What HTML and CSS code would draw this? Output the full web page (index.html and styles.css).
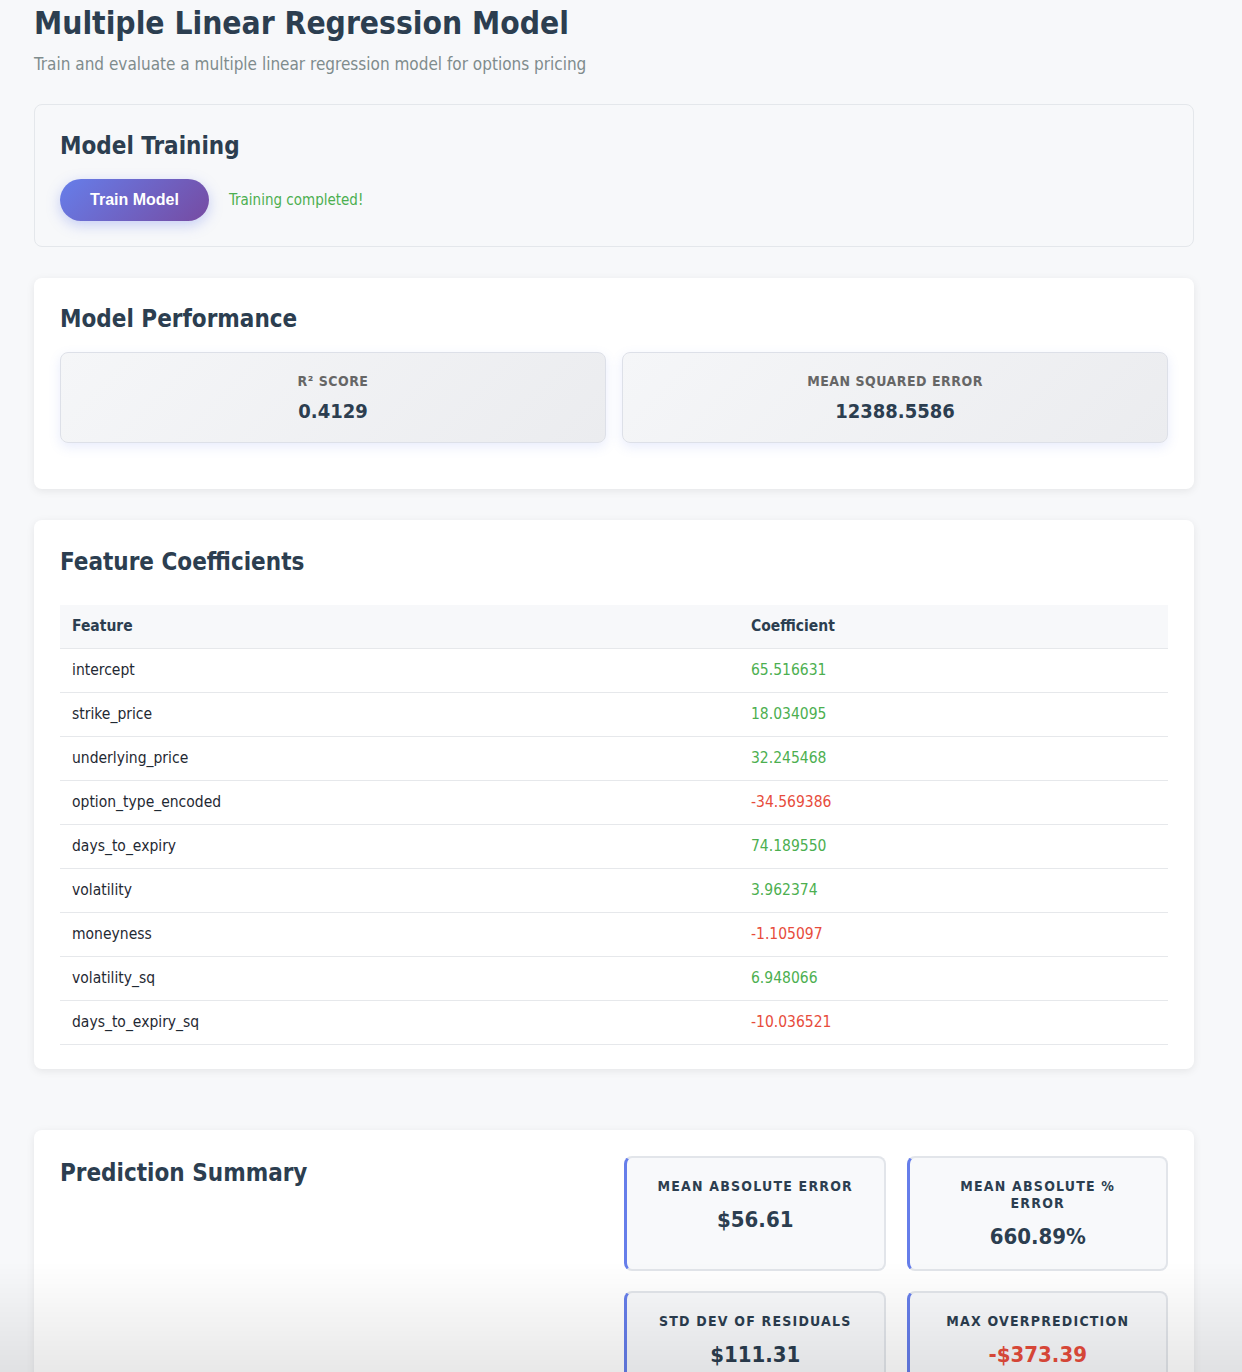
FILE: index.html
```html
<!DOCTYPE html>
<html lang="en">
<head>
<meta charset="utf-8">
<title>Multiple Linear Regression Model</title>
<link rel="stylesheet" href="styles.css">
</head>
<body>
<div class="container">
  <header class="page-header">
    <h1>Multiple Linear Regression Model</h1>
    <p class="subtitle">Train and evaluate a multiple linear regression model for options pricing</p>
  </header>

  <section class="card card-muted">
    <h2>Model Training</h2>
    <div class="train-row">
      <button class="btn-train">Train Model</button>
      <span class="status-ok">Training completed!</span>
    </div>
  </section>

  <section class="card card-perf">
    <h2>Model Performance</h2>
    <div class="metrics">
      <div class="metric">
        <div class="metric-label">R² Score</div>
        <div class="metric-value">0.4129</div>
      </div>
      <div class="metric">
        <div class="metric-label">Mean Squared Error</div>
        <div class="metric-value">12388.5586</div>
      </div>
    </div>
  </section>

  <section class="card card-table">
    <h2 class="h2-table">Feature Coefficients</h2>
    <table class="coef-table">
      <thead>
        <tr><th class="col-feature">Feature</th><th>Coefficient</th></tr>
      </thead>
      <tbody>
        <tr><td>intercept</td><td class="pos">65.516631</td></tr>
        <tr><td>strike_price</td><td class="pos">18.034095</td></tr>
        <tr><td>underlying_price</td><td class="pos">32.245468</td></tr>
        <tr><td>option_type_encoded</td><td class="neg">-34.569386</td></tr>
        <tr><td>days_to_expiry</td><td class="pos">74.189550</td></tr>
        <tr><td>volatility</td><td class="pos">3.962374</td></tr>
        <tr><td>moneyness</td><td class="neg">-1.105097</td></tr>
        <tr><td>volatility_sq</td><td class="pos">6.948066</td></tr>
        <tr><td>days_to_expiry_sq</td><td class="neg">-10.036521</td></tr>
      </tbody>
    </table>
  </section>

  <section class="card card-summary">
    <div class="summary-grid">
      <h2>Prediction Summary</h2>
      <div class="stats">
        <div class="stat">
          <div class="stat-label">Mean Absolute Error</div>
          <div class="stat-value">$56.61</div>
        </div>
        <div class="stat">
          <div class="stat-label">Mean Absolute % Error</div>
          <div class="stat-value">660.89%</div>
        </div>
        <div class="stat">
          <div class="stat-label">Std Dev of Residuals</div>
          <div class="stat-value">$111.31</div>
        </div>
        <div class="stat">
          <div class="stat-label">Max Overprediction</div>
          <div class="stat-value neg">-$373.39</div>
        </div>
      </div>
    </div>
  </section>
</div>
<div class="bottom-fade"></div>
</body>
</html>
```

FILE: styles.css
```css
* { box-sizing: border-box; }

body {
  margin: 0;
  padding: 0 48px 40px 34px;
  background: #f7f8fa;
  color: #2c3e50;
  font-family: "DejaVu Sans Condensed", "DejaVu Sans", sans-serif;
}

.container {
  max-width: 1160px;
}

.page-header {
  padding-top: 3px;
  margin-bottom: 29px;
}

h1 {
  margin: 0;
  font-size: 31.5px;
  line-height: 40px;
  font-weight: bold;
  color: #2c3e50;
}

.subtitle {
  margin: 0;
  margin-top: 10px;
  font-size: 17px;
  line-height: 22px;
  color: #7f8c8d;
}

.card {
  background: #fff;
  border-radius: 8px;
  padding: 24px 26px 26px;
  margin-bottom: 31px;
  box-shadow: 0 2px 8px rgba(0, 0, 0, 0.08);
}

.card-muted {
  background: #f7f8fa;
  border: 1px solid #e4e7eb;
  box-shadow: none;
  padding: 24px 25px 25px;
}

.card-perf {
  padding-bottom: 46px;
}

.card-table {
  padding-top: 25px;
  padding-bottom: 24px;
}

h2 {
  margin: 0 0 16px;
  font-size: 24px;
  line-height: 34px;
  font-weight: bold;
  color: #2c3e50;
}

.train-row {
  display: flex;
  align-items: center;
  gap: 20px;
}

.btn-train {
  width: 149px;
  height: 42px;
  border: none;
  border-radius: 21px;
  background: linear-gradient(135deg, #667eea 0%, #764ba2 100%);
  color: #fff;
  font-family: "Liberation Sans", Arial, sans-serif;
  font-size: 16px;
  font-weight: bold;
  box-shadow: 0 4px 14px rgba(102, 126, 234, 0.35);
  cursor: pointer;
}

.status-ok {
  color: #4caf50;
  font-size: 15px;
}

.metrics {
  display: grid;
  grid-template-columns: 1fr 1fr;
  gap: 16px;
}

.metric {
  height: 91px;
  border: 1px solid #dde0e8;
  border-radius: 8px;
  background: linear-gradient(135deg, #f5f6f8 0%, #ebecef 100%);
  box-shadow: 0 4px 12px rgba(102, 126, 234, 0.15);
  display: flex;
  flex-direction: column;
  align-items: center;
  justify-content: center;
  gap: 10px;
}

.metric-label {
  font-size: 14px;
  font-weight: bold;
  text-transform: uppercase;
  letter-spacing: 0.5px;
  color: #666;
}

.metric-value {
  font-size: 20px;
  font-weight: bold;
  color: #2c3e50;
}

.h2-table {
  margin-bottom: 26px;
}

.coef-table {
  width: 100%;
  border-collapse: collapse;
  font-size: 15.5px;
}

.coef-table th,
.coef-table td {
  text-align: left;
  padding: 12px 12px;
  height: 44px;
  border-bottom: 1px solid #e6e8eb;
}

.coef-table th {
  height: 43px;
  background: #f7f8fa;
  font-weight: bold;
  color: #2c3e50;
}

.coef-table td {
  color: #1f2933;
}

.col-feature {
  width: 679px;
}

.pos { color: #4caf50 !important; }
.neg { color: #e74c3c !important; }

.card-summary {
  margin-top: 61px;
  padding-top: 26px;
}

.summary-grid {
  display: grid;
  grid-template-columns: 1fr 544px;
  gap: 20px;
  align-items: start;
}

.stats {
  display: grid;
  grid-template-columns: 1fr 1fr;
  gap: 20px 21px;
}

.stat {
  min-height: 111px;
  background: #f8f9fb;
  border: 2px solid #e2e5ea;
  border-left: 3px solid #667eea;
  border-radius: 8px;
  padding: 20px 24px;
  display: flex;
  flex-direction: column;
  align-items: center;
  text-align: center;
  gap: 12px;
}

.stat-label {
  font-size: 14px;
  font-weight: bold;
  text-transform: uppercase;
  letter-spacing: 1.2px;
  color: #2c3e50;
  line-height: 17px;
}

.stat-value {
  font-size: 22px;
  font-weight: bold;
  color: #2c3e50;
}

.bottom-fade {
  position: fixed;
  left: 0;
  right: 0;
  bottom: 0;
  height: 110px;
  background: linear-gradient(to bottom, rgba(0, 0, 0, 0) 0%, rgba(0, 0, 0, 0.09) 100%);
  pointer-events: none;
}
```
